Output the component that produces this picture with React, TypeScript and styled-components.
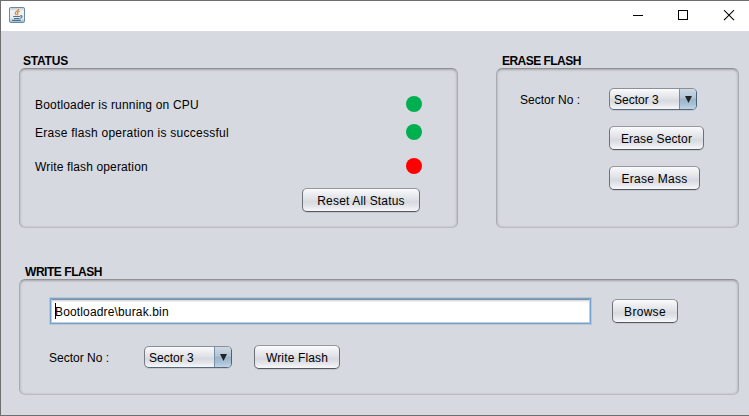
import React from "react";
import styled, { createGlobalStyle, css } from "styled-components";

const GlobalStyle = createGlobalStyle`
  * { box-sizing: border-box; }
  body { margin: 0; overflow: hidden; }
`;

const Window = styled.div`
  width: 749px;
  height: 416px;
  display: flex;
  flex-direction: column;
  border: 1px solid #6e6e6f;
  border-right: 0;
  background: #d6d9df;
  color: #000;
  font: 12px/15px "Liberation Sans", Arial, sans-serif;
  white-space: nowrap;
`;

const TitleBar = styled.header`
  flex: none;
  height: 30px;
  padding: 5px 14px 0 7px;
  display: flex;
  justify-content: space-between;
  background: #fff;
`;

const WindowControls = styled.div`
  display: flex;
  gap: 34px;
  padding-top: 4px;
`;

const Content = styled.main`
  padding: 22px 10px 0 18px;
  display: flex;
  flex-direction: column;
  gap: 36px;
`;

const TopRow = styled.div`
  display: flex;
  justify-content: space-between;
`;

const Group = styled.section<{ $width: number }>`
  width: ${(p) => p.$width}px;
`;

const Legend = styled.h2<{ $indent: number; $tracking: number }>`
  margin: 0;
  height: 15px;
  padding-left: ${(p) => p.$indent}px;
  font-size: 12px;
  line-height: 16px;
  font-weight: bold;
  letter-spacing: ${(p) => p.$tracking}px;
`;

const panel = css`
  border: 1px solid;
  border-color: #8f9195 #a9abb0 #b9bbc0 #a9abb0;
  border-radius: 6px;
  box-shadow: inset 0 2px 2px -1px #a9abb0, inset 1px 0 2px #c0c2c8, inset -1px 0 2px #c0c2c8;
`;

const StatusPanel = styled.div`
  ${panel}
  height: 160px;
  padding: 27px 35px 0 15px;
  display: flex;
  flex-direction: column;
`;

const StatusRow = styled.div<{ $after: number }>`
  height: 16px;
  margin-bottom: ${(p) => p.$after}px;
  display: flex;
  justify-content: space-between;
`;

const Lamp = styled.span<{ $on: boolean }>`
  width: 16px;
  height: 16px;
  border-radius: 50%;
  background: ${(p) => (p.$on ? "#00b050" : "#ff0000")};
`;

const Label = styled.span<{ $tracking?: number }>`
  line-height: 17px;
  padding-top: 1px;
  letter-spacing: ${(p) => p.$tracking ?? 0}px;
`;

const ErasePanel = styled.div`
  ${panel}
  height: 160px;
  padding: 19px 0 0 23px;
  display: grid;
  grid-template-columns: 89px auto;
  grid-auto-rows: max-content;
  row-gap: 16px;
  justify-items: start;
  align-items: center;
`;

const FieldCaption = styled(Label)`
  display: block;
  padding-top: 2px;
`;

const WritePanel = styled.div`
  ${panel}
  height: 116px;
  padding: 17px 0 0 29px;
`;

const FileRow = styled.div`
  display: flex;
  align-items: center;
  gap: 20px;
`;

const SectorRow = styled.div`
  display: flex;
  align-items: center;
  margin-top: 20px;
`;

const raised = css`
  border: 1px solid;
  border-color: #95989e #6d7076 #55585d #6d7076;
  border-radius: 5px;
  background: linear-gradient(#fbfbfc 0%, #eeeff2 20%, #dfe1e6 48%, #d6d9df 58%, #e3e5ea 78%, #f7f8fa 100%);
  box-shadow: 0 1px 0 #c3c6cc;
`;

const Button = styled.button<{ $width: number; $left?: number; $tracking?: number }>`
  ${raised}
  width: ${(p) => p.$width}px;
  height: 24px;
  margin: 0 0 0 ${(p) => p.$left ?? 0}px;
  padding: 2px 0 0;
  color: #000;
  font: inherit;
  letter-spacing: ${(p) => p.$tracking ?? 0}px;
  text-align: center;
`;

const EraseButton = styled(Button)`
  grid-column: 2;
`;

const ResetButton = styled(Button)`
  align-self: flex-end;
  margin-right: 2px;
`;

const Combo = styled.div<{ $left?: number }>`
  ${raised}
  width: 88px;
  height: 22px;
  margin-left: ${(p) => p.$left ?? 0}px;
  display: flex;
  overflow: hidden;
  border-color: #8b9097 #48627a #56697c #777c84;
`;

const ComboValue = styled.span`
  flex: 1;
  padding-left: 4px;
  line-height: 22px;
`;

const ComboArrow = styled.span`
  width: 17px;
  display: flex;
  align-items: center;
  justify-content: center;
  border-left: 1px solid #7390a8;
  background: linear-gradient(#ccd9e5 0%, #b5c6d5 42%, #9fb6c9 52%, #a9c0d4 75%, #bfd6ea 100%);
`;

const FileField = styled.div`
  width: 543px;
  height: 28px;
  border: 1px solid #b3c9df;
  border-radius: 1px;
  background: #73a4d1;
  padding: 1px;
`;

const FieldInner = styled.div`
  height: 24px;
  display: flex;
  align-items: center;
  border: solid #c9cbcf;
  border-width: 1px;
  border-top-color: #8d8e91;
  background: linear-gradient(#dcdde0 0 1px, #fff 2px);
  padding-left: 3px;
`;

const FileName = styled(Label)`
  padding-top: 2px;
`;

const Caret = styled.span`
  width: 1px;
  height: 16px;
  margin-right: -1px;
  background: #000;
`;

function JavaIcon() {
  return (
    <svg width="18" height="18" viewBox="0 0 18 18">
      <defs>
        <linearGradient id="cup" x1="0" y1="0" x2="0" y2="1">
          <stop offset="0" stopColor="#b9cbd6" />
          <stop offset="0.25" stopColor="#f1f3f4" />
          <stop offset="0.7" stopColor="#e8ecef" />
          <stop offset="1" stopColor="#9db5c6" />
        </linearGradient>
      </defs>
      <rect x="1.5" y="1.5" width="15" height="15" rx="1.2" fill="url(#cup)" stroke="#668aa2" />
      <path d="M10.6 3C11 5 6.8 5.3 7.2 7.2C7.4 8.2 8 8.6 8.4 9.2M11.7 5.2C9 6.2 9.2 7 9.8 7.9C10.1 8.5 9.7 8.8 9.3 9.2" fill="none" stroke="#e8842d" strokeWidth="1.2" />
      <path d="M5.2 10.5H12.2M6 12.5H11.6M4.2 14.4H12.8M12.2 9.8C14.8 9.3 14.6 11.5 12.2 12.2" fill="none" stroke="#47718e" strokeWidth="1.1" />
    </svg>
  );
}

function SectorCombo({ left }: { left?: number }) {
  return (
    <Combo $left={left} role="combobox" aria-expanded={false}>
      <ComboValue>Sector 3</ComboValue>
      <ComboArrow>
        <svg width="7" height="7" viewBox="0 0 7 7">
          <path d="M0 0H7L3.5 7Z" fill="#202428" />
        </svg>
      </ComboArrow>
    </Combo>
  );
}

const statuses = [
  { text: "Bootloader is running on CPU", on: true, after: 12, tracking: 0.18 },
  { text: "Erase flash operation is successful", on: true, after: 18, tracking: 0.26 },
  { text: "Write flash operation", on: false, after: 14, tracking: 0.14 },
];

export default function App() {
  return (
    <>
      <GlobalStyle />
      <Window>
        <TitleBar>
          <JavaIcon />
          <WindowControls>
            <svg width="12" height="12" viewBox="0 0 12 12" shapeRendering="crispEdges">
              <path d="M2 5.5H12" stroke="#000" />
            </svg>
            <svg width="12" height="12" viewBox="0 0 12 12" shapeRendering="crispEdges">
              <rect x="1.5" y="0.5" width="9" height="9" fill="none" stroke="#000" />
            </svg>
            <svg width="12" height="12" viewBox="0 0 12 12">
              <path d="M1 0.2L11 10.2M11 0.2L1 10.2" stroke="#000" strokeWidth="1.1" />
            </svg>
          </WindowControls>
        </TitleBar>
        <Content>
          <TopRow>
            <Group $width={439}>
              <Legend $indent={4} $tracking={-0.2}>STATUS</Legend>
              <StatusPanel>
                {statuses.map((s) => (
                  <StatusRow key={s.text} $after={s.after}>
                    <Label $tracking={s.tracking}>{s.text}</Label>
                    <Lamp $on={s.on} />
                  </StatusRow>
                ))}
                <ResetButton $width={118} $tracking={0.17}>Reset All Status</ResetButton>
              </StatusPanel>
            </Group>
            <Group $width={243}>
              <Legend $indent={6} $tracking={-0.53}>ERASE FLASH</Legend>
              <ErasePanel>
                <FieldCaption>Sector No :</FieldCaption>
                <SectorCombo />
                <EraseButton $width={95} $tracking={0.15}>Erase Sector</EraseButton>
                <EraseButton $width={91} $tracking={0.25}>Erase Mass</EraseButton>
              </ErasePanel>
            </Group>
          </TopRow>
          <Group $width={720}>
            <Legend $indent={6} $tracking={-0.45}>WRITE FLASH</Legend>
            <WritePanel>
              <FileRow>
                <FileField>
                  <FieldInner>
                    <Caret />
                    <FileName $tracking={0.15}>Bootloadre\burak.bin</FileName>
                  </FieldInner>
                </FileField>
                <Button $width={66} $tracking={0.3}>Browse</Button>
              </FileRow>
              <SectorRow>
                <FieldCaption>Sector No :</FieldCaption>
                <SectorCombo left={35} />
                <Button $width={86} $left={22} $tracking={0.15}>Write Flash</Button>
              </SectorRow>
            </WritePanel>
          </Group>
        </Content>
      </Window>
    </>
  );
}
